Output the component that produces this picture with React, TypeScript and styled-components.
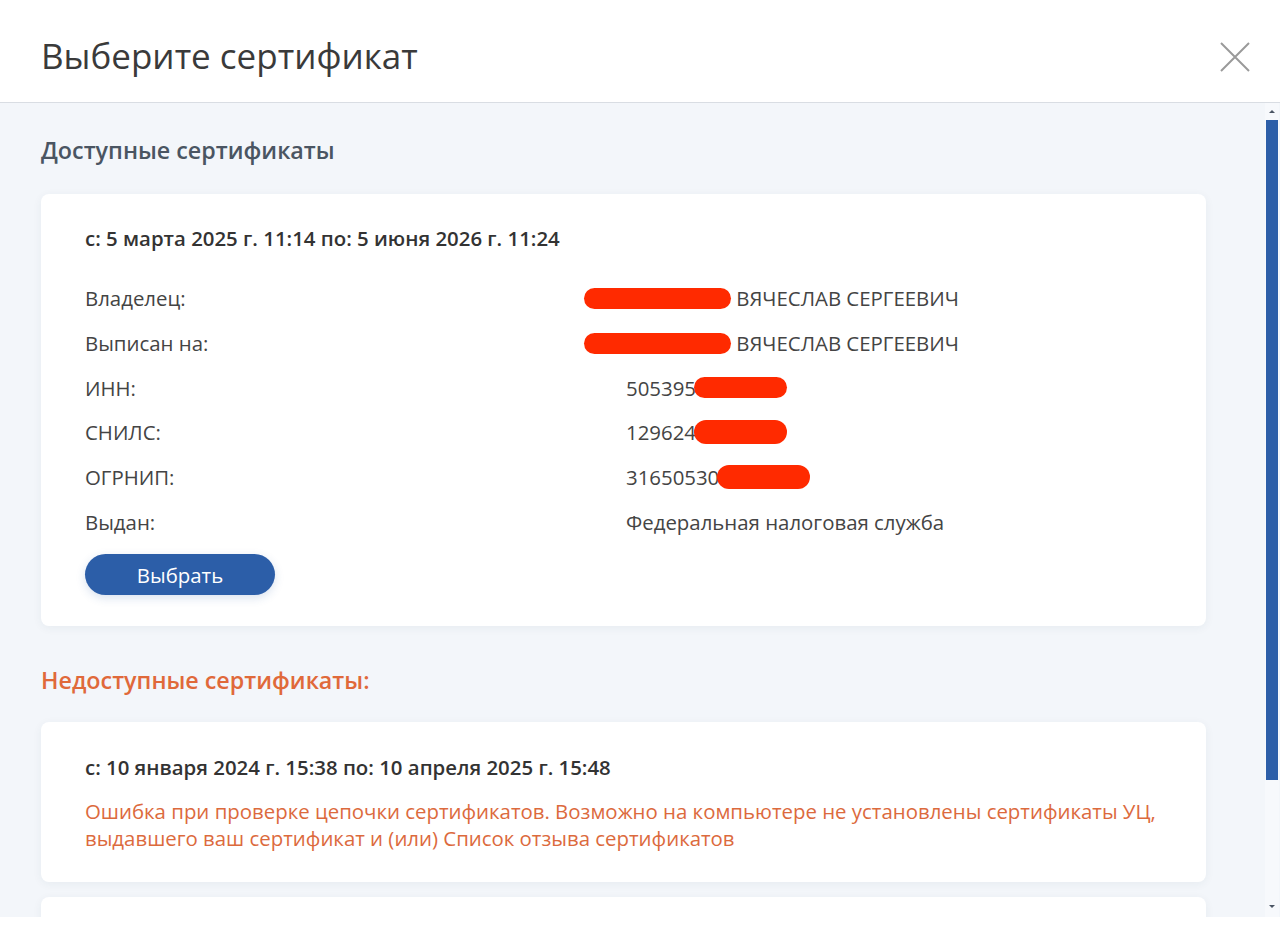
import React from 'react';
import styled, { createGlobalStyle } from 'styled-components';

const GlobalStyle = createGlobalStyle`
  html, body {
    margin: 0;
    padding: 0;
    background: #ffffff;
  }
  body {
    font-family: "Open Sans", "Noto Sans", Arial, sans-serif;
    color: #3b3b3b;
  }
`;

const Dialog = styled.div`
  width: 1280px;
  height: 945px;
  display: flex;
  flex-direction: column;
  background: #ffffff;
  overflow: hidden;
`;

const Header = styled.header`
  height: 90px;
  flex: none;
  display: flex;
  align-items: center;
  justify-content: space-between;
  padding: 12px 28px 0 41px;
  border-bottom: 1px solid #d9dde3;
  box-sizing: content-box;
`;

const Title = styled.h1`
  margin: 0 0 4px;
  font-size: 35px;
  font-weight: 400;
  color: #3a3a3a;
`;

const CloseButton = styled.button`
  width: 34px;
  height: 34px;
  border: none;
  background: transparent;
  padding: 0;
  cursor: pointer;
  display: flex;
  align-items: center;
  justify-content: center;
`;

const Body = styled.div`
  height: 814px;
  flex: none;
  display: flex;
  background: #f3f6fa;
`;

const ScrollArea = styled.div`
  flex: 1;
  overflow: hidden;
  padding: 32px 59px 0 41px;
`;

const ScrollTrack = styled.div`
  width: 14px;
  flex: none;
  display: flex;
  flex-direction: column;
  align-items: center;
  padding: 2px 0 4px;
  margin-right: 1px;
  background: #f7f9fc;
`;

const Arrow = styled.div<{ $down?: boolean }>`
  width: 0;
  height: 0;
  border-left: 3px solid transparent;
  border-right: 3px solid transparent;
  ${p => p.$down ? 'border-top: 3px solid #4a5563;' : 'border-bottom: 3px solid #4a5563;'}
  margin: 5px 0;
`;

const Thumb = styled.div`
  width: 12px;
  height: 660px;
  margin-top: 2px;
  background: #2c5ea8;
`;

const TrackSpacer = styled.div`
  flex: 1;
`;

const SectionTitle = styled.h2<{ $warn?: boolean }>`
  margin: ${p => p.$warn ? '39px 0 26px' : '0 0 28px'};
  font-size: 23.3px;
  line-height: 31px;
  font-weight: 600;
  color: ${p => p.$warn ? '#e0693a' : '#4a5562'};
`;

const Card = styled.div<{ $compact?: boolean }>`
  background: #ffffff;
  border-radius: 8px;
  box-shadow: 0 2px 10px rgba(40, 60, 90, 0.06);
  padding: ${p => p.$compact ? '31px 44px 30px' : '30px 44px 31px'};
  margin-bottom: 15px;
`;

const Period = styled.div`
  font-size: 20.4px;
  line-height: 28px;
  font-weight: 600;
  color: #333333;
`;

const InfoGrid = styled.div`
  display: grid;
  grid-template-columns: 541px 1fr;
  grid-auto-rows: 44.7px;
  align-items: center;
  margin-top: 24px;
  font-size: 20.4px;
  color: #444444;
`;

const Label = styled.div``;

const Value = styled.div`
  white-space: nowrap;
  display: flex;
  align-items: center;
`;

const Redaction = styled.span<{ $w: number; $h?: number; $shift?: number }>`
  display: inline-block;
  width: ${p => p.$w}px;
  height: ${p => p.$h ?? 21}px;
  margin-left: ${p => p.$shift ?? 0}px;
  border-radius: 12px;
  background: #ff2a00;
  flex: none;
`;

const SelectButton = styled.button`
  margin-top: 10px;
  width: 190px;
  height: 41px;
  border: none;
  border-radius: 21px;
  background: #2c5ea8;
  color: #ffffff;
  font-family: inherit;
  font-size: 20.4px;
  box-shadow: 0 3px 10px rgba(44, 94, 168, 0.18);
  cursor: pointer;
`;

const ErrorText = styled.p`
  margin: 17px 0 0;
  font-size: 20.4px;
  line-height: 27px;
  color: #dc6a3d;
  white-space: nowrap;
`;

const rows: { label: string; value: React.ReactNode }[] = [
  { label: 'Владелец:', value: <><Redaction $w={147} $shift={-42} />&nbsp;ВЯЧЕСЛАВ СЕРГЕЕВИЧ</> },
  { label: 'Выписан на:', value: <><Redaction $w={147} $shift={-42} />&nbsp;ВЯЧЕСЛАВ СЕРГЕЕВИЧ</> },
  { label: 'ИНН:', value: <>505395<Redaction $w={93} $shift={-2} /></> },
  { label: 'СНИЛС:', value: <>129624<Redaction $w={93} $h={24} $shift={-2} /></> },
  { label: 'ОГРНИП:', value: <>31650530<Redaction $w={93} $h={24} $shift={-2} /></> },
  { label: 'Выдан:', value: 'Федеральная налоговая служба' },
];

const CloseIcon = () => (
  <svg width="32" height="32" viewBox="0 0 32 32">
    <path d="M2 2 L30 30 M30 2 L2 30" stroke="#9a9a9a" strokeWidth="2" fill="none" />
  </svg>
);

export default function App() {
  return (
    <>
      <GlobalStyle />
      <Dialog>
        <Header>
          <Title>Выберите сертификат</Title>
          <CloseButton aria-label="Закрыть">
            <CloseIcon />
          </CloseButton>
        </Header>
        <Body>
          <ScrollArea>
            <SectionTitle>Доступные сертификаты</SectionTitle>
            <Card>
              <Period>с: 5 марта 2025 г. 11:14 по: 5 июня 2026 г. 11:24</Period>
              <InfoGrid>
                {rows.map(r => (
                  <React.Fragment key={r.label}>
                    <Label>{r.label}</Label>
                    <Value>{r.value}</Value>
                  </React.Fragment>
                ))}
              </InfoGrid>
              <SelectButton>Выбрать</SelectButton>
            </Card>

            <SectionTitle $warn>Недоступные сертификаты:</SectionTitle>
            <Card $compact>
              <Period>с: 10 января 2024 г. 15:38 по: 10 апреля 2025 г. 15:48</Period>
              <ErrorText>
                Ошибка при проверке цепочки сертификатов. Возможно на компьютере не установлены сертификаты УЦ,
                <br />
                выдавшего ваш сертификат и (или) Список отзыва сертификатов
              </ErrorText>
            </Card>
            <Card $compact>
              <Period>&nbsp;</Period>
            </Card>
          </ScrollArea>
          <ScrollTrack>
            <Arrow />
            <Thumb />
            <TrackSpacer />
            <Arrow $down />
          </ScrollTrack>
        </Body>
      </Dialog>
    </>
  );
}
